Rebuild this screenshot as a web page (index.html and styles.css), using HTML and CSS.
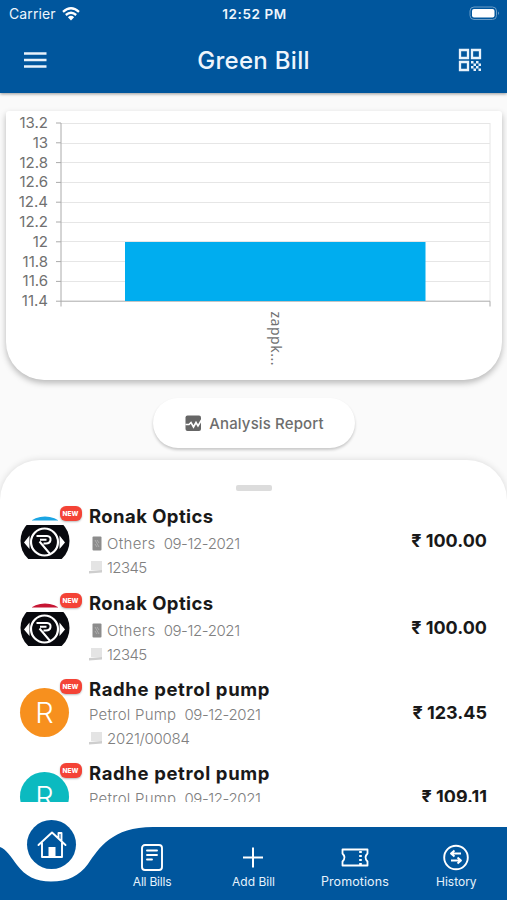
FILE: index.html
```html
<!DOCTYPE html>
<html lang="en">
<head>
<meta charset="utf-8">
<title>Green Bill</title>
<link rel="stylesheet" href="styles.css">
</head>
<body>
<svg width="0" height="0" class="defs" aria-hidden="true">
  <defs>
    <clipPath id="disc"><circle cx="25" cy="25" r="24.5"/></clipPath>
    <g id="optics" clip-path="url(#disc)">
      <rect y="9" width="50" height="34" fill="#08090e"/>
      <path d="M9.500 19.500 4 26.500 9.500 33Z M39.500 19.500 45 26.500 39.500 33Z" fill="#fff"/>
      <circle cx="24.500" cy="26" r="13.500" fill="#08090e" stroke="#fff" stroke-width="2.200"/>
      <path d="M16.500 20H27Q31 20.500 30.500 24T26 27.500H23.500M20 23.700H26.500M19.500 25.500 30.500 38.500" fill="none" stroke="#fff" stroke-width="2"/>
    </g>
    <g id="receipt"><path d="M2 1H13V10H2Z" fill="#e4e4e4"/><path d="M0 11 13 10V12.500L0 13.500Z" fill="#cecece"/></g>
    <g id="device"><rect x=".5" y=".5" width="9" height="14" rx="1" fill="#8c8c8c"/><path d="M3 4 7 11M3 8 5 11M5 4 7 7" stroke="#adadad" stroke-width="1"/></g>
  </defs>
</svg>
<div class="screen">
  <header class="top">
    <div class="status">
      <div class="carrier">Carrier
        <svg width="18" height="14" viewBox="0 0 18 14" fill="none" stroke="#fff" stroke-width="2.300"><path d="M1 4.800Q9-2.200 17 4.800M3.800 8Q9 3.600 14.200 8"/><path d="M5.900 10.200Q9 7.500 12.100 10.200L9 13.500Z" fill="#fff" stroke="none"/></svg>
      </div>
      <div class="clock">12:52 PM</div>
      <svg class="battery" width="31" height="15" viewBox="0 0 31 15"><rect x="1" y="1" width="26.500" height="12.500" rx="4" fill="none" stroke="#6b9dc7"/><rect x="3" y="3" width="22.500" height="8.500" rx="2" fill="#fff"/><path d="M29 5.500Q31 7.200 29 9Z" fill="#6b9dc7"/></svg>
    </div>
    <div class="appbar">
      <svg width="24" height="18" viewBox="0 0 24 18" stroke="#e8f2fb" stroke-width="2.500"><path d="M1 2.500H23.500M1 9H23.500M1 15.500H23.500"/></svg>
      <h1>Green Bill</h1>
      <svg width="24" height="24" viewBox="0 0 24 24"><path d="M2 2H10V10H2ZM14 2H22V10H14ZM2 14H10V22H2Z" fill="none" stroke="#e8f2fb" stroke-width="2.300"/><path d="M13 13h2.500v2.500H13zM18 13h2.500v2.500H18zM15.500 15.500H18V18h-2.500zM20.500 15.500H23V18h-2.500zM13 18h2.500v2.500H13zM18 18h2.500v2.500H18zM15.500 20.500H18V23h-2.500zM20.500 20.500H23V23h-2.500z" fill="#e8f2fb"/></svg>
    </div>
  </header>

  <section class="chart-card">
    <svg width="496" height="269" viewBox="6 111 496 269">
      <path d="M61 123.500H490M61 143.500H490M61 162.500H490M61 182.500H490M61 202.500H490M61 222.500H490M61 241.500H490M61 261.500H490M61 281.500H490M490 123V301" stroke="#e6e6e6" fill="none"/>
      <path d="M56 123H61M56 142.800H61M56 162.600H61M56 182.400H61M56 202.200H61M56 222H61M56 241.800H61M56 261.600H61M56 281.400H61M56 301.200H490V306.500M61 123V306.500" stroke="#aaa" fill="none"/>
      <rect x="125" y="242" width="300.500" height="59" fill="#00adef"/>
      <g class="ticks">
        <text x="48" y="128">13.2</text><text x="48" y="147.800">13</text><text x="48" y="167.600">12.8</text><text x="48" y="187.400">12.6</text><text x="48" y="207.200">12.4</text><text x="48" y="227">12.2</text><text x="48" y="246.800">12</text><text x="48" y="266.600">11.8</text><text x="48" y="286.400">11.6</text><text x="48" y="306.200">11.4</text>
      </g>
      <text class="category" transform="translate(270.500 311.500) rotate(90)" textLength="54">zappk...</text>
    </svg>
  </section>

  <button class="report">
    <svg width="17" height="17" viewBox="0 0 17 17"><rect x=".5" y=".5" width="15.500" height="15.500" rx="2" fill="#666"/><path d="M.5 9.500H4L6 7.500 8.500 12 11 7.500 13 11 16.500 5" fill="none" stroke="#fff" stroke-width="1.600"/></svg>
    <span>Analysis Report</span>
  </button>

  <main class="sheet">
    <div class="handle"></div>
    <div class="list">
      <article class="bill shop">
        <div class="avatar"><svg width="50" height="50"><rect x="12" width="26" height="4.500" fill="#1ba5e3" clip-path="url(#disc)"/><use href="#optics"/></svg><b class="new">NEW</b></div>
        <div class="info"><h2>Ronak Optics</h2><p class="meta"><svg class="dev" width="10" height="15"><use href="#device"/></svg><span class="others">Others</span><span class="date">09-12-2021</span></p><p class="num"><svg width="14" height="14"><use href="#receipt"/></svg><span class="short">12345</span></p></div>
        <div class="price">₹ 100.00</div>
      </article>
      <article class="bill shop second">
        <div class="avatar"><svg width="50" height="50"><rect x="12" width="26" height="4.500" fill="#c61533" clip-path="url(#disc)"/><use href="#optics"/></svg><b class="new">NEW</b></div>
        <div class="info"><h2>Ronak Optics</h2><p class="meta"><svg class="dev" width="10" height="15"><use href="#device"/></svg><span class="others">Others</span><span class="date">09-12-2021</span></p><p class="num"><svg width="14" height="14"><use href="#receipt"/></svg><span class="short">12345</span></p></div>
        <div class="price">₹ 100.00</div>
      </article>
      <article class="bill pump">
        <div class="avatar"><div class="letter orange">R</div><b class="new">NEW</b></div>
        <div class="info"><h2>Radhe petrol pump</h2><p class="meta"><span class="kind">Petrol Pump</span><span class="date">09-12-2021</span></p><p class="num"><svg width="14" height="14"><use href="#receipt"/></svg><span class="long">2021/00084</span></p></div>
        <div class="price">₹ 123.45</div>
      </article>
      <article class="bill pump">
        <div class="avatar"><div class="letter teal">R</div><b class="new">NEW</b></div>
        <div class="info"><h2>Radhe petrol pump</h2><p class="meta"><span class="kind">Petrol Pump</span><span class="date">09-12-2021</span></p></div>
        <div class="price">₹ 109.11</div>
      </article>
    </div>
  </main>

  <nav class="tabs">
    <svg class="wave" width="507" height="100" viewBox="0 800 507 100"><path d="M0 847C6 849 11 857 17 865C25 876 36 881.500 51 881.500C68 881.500 79 876 88 864C99 848 112 827 153 827H507V900H0Z" fill="#00569d"/></svg>
    <a class="home"><svg width="30" height="28" viewBox="0 0 30 28" fill="none" stroke="#fff" stroke-width="1.900" stroke-linejoin="round" stroke-linecap="round"><path d="M1.500 14 15 1.500 28.500 14M5 12V26H25V12M21.500 7V2H24.500V10"/><path d="M11.500 26V16H18.500V26Z" fill="#fff" stroke="none"/></svg></a>
    <a class="tab"><svg width="30" height="30" viewBox="0 0 30 30" fill="none" stroke="#fff" stroke-width="1.900" stroke-linecap="round"><rect x="5" y="3" width="20" height="25" rx="3"/><path d="M10 8.500H20M10 13H20M10 17.500H15"/></svg><span class="l1">All Bills</span></a>
    <a class="tab"><svg width="30" height="30" viewBox="0 0 30 30" stroke="#fff" stroke-width="2"><path d="M15 5.500V25.500M5 15.500H25"/></svg><span class="l2">Add Bill</span></a>
    <a class="tab"><svg width="30" height="30" viewBox="0 0 30 30" fill="none" stroke="#fff" stroke-width="1.800" stroke-linejoin="round"><path d="M2.500 7.500H27.500V11.500Q23.500 15.500 27.500 19.500V23.500H2.500V19.500Q6.500 15.500 2.500 11.500Z"/><path d="M20.500 9V23" stroke-width="2.600" stroke-dasharray="2 2"/></svg><span class="l3">Promotions</span></a>
    <a class="tab"><svg width="30" height="30" viewBox="0 0 30 30" fill="none" stroke="#fff" stroke-width="1.900" stroke-linejoin="round"><circle cx="15" cy="15.500" r="11.800"/><path d="M20 11.500H10M13.500 8.500 10 11.500 13.500 14.500M10 18.500H20M16.500 15.500 20 18.500 16.500 21.500"/></svg><span class="l4">History</span></a>
  </nav>
</div>
</body>
</html>
```
FILE: styles.css
```css
* { box-sizing: border-box; }
body, h1, h2, p { margin: 0; }
body { background: #fafafa; font-family: Inter, "Liberation Sans", sans-serif; }
svg { display: block; flex: none; }
.defs { position: absolute; }
.screen { width: 507px; height: 900px; overflow: hidden; display: flex; flex-direction: column; align-items: center; background: #fafafa; }

.top { width: 100%; height: 93px; flex: none; background: #00569d; color: #eef5fc; box-shadow: 0 1px 3px #0006; }
.status { height: 27px; padding: 0 7px 0 9px; display: grid; grid-template-columns: 1fr auto 1fr; align-items: center; font-size: 14px; }
.carrier { display: flex; align-items: center; gap: 6px; letter-spacing: .1px; }
.clock { font-size: 13.5px; font-weight: 600; letter-spacing: .6px; }
.battery { justify-self: end; }
.appbar { height: 66px; padding: 0 25px 0 23px; display: flex; align-items: center; justify-content: space-between; }
h1 { font-size: 24px; font-weight: 500; letter-spacing: .3px; margin-left: 2px; }

.chart-card { width: 496px; height: 269px; margin-top: 18px; flex: none; background: #fff; border-radius: 3px 3px 38px 38px; box-shadow: 0 3px 6px #0004; }
.ticks text { font-size: 15px; fill: #707070; text-anchor: end; }
.category { font-family: "Noto Sans", sans-serif; font-size: 14px; fill: #707070; }

.report { width: 202px; height: 50px; margin: 18px 0 0; padding: 0 0 0 2px; flex: none; border: 0; border-radius: 25px; background: #fff; color: #6d6d6d; box-shadow: 0 2px 3px #0003; display: flex; align-items: center; justify-content: center; gap: 7px; font: 500 15px Inter, sans-serif; letter-spacing: .13px; }

.sheet { width: 100%; height: 440px; margin-top: 12px; flex: none; background: #fff; border-radius: 40px 40px 0 0; box-shadow: 0 0 7px #0002; }
.handle { width: 36px; height: 6px; margin: 25px auto 0; border-radius: 2px; background: #dcdcdc; }
.list { height: 301px; margin-top: 10px; padding-top: 6px; overflow: hidden; }
.bill { height: 84px; padding: 0 20px; display: flex; }
.shop { height: 87px; }
.shop.second { height: 86px; }
.avatar { width: 69px; position: relative; padding-top: 8px; }
.shop .avatar { padding-top: 9px; }
.letter { width: 49px; height: 49px; border-radius: 50%; color: #fff; font: 300 29px/49px Inter, sans-serif; text-align: center; }
.orange { background: #f7901e; }
.teal { background: #0bbac0; }
.new { position: absolute; left: 39.500px; top: -1px; width: 22px; height: 15px; border-radius: 6px; background: #f44336; color: #fff; font: 800 6.5px/16px Inter, sans-serif; text-align: center; box-shadow: 0 1px 2px #0004; }
.info { flex: 1; }
h2 { height: 20px; font-size: 18.500px; line-height: 18px; font-weight: 700; letter-spacing: .42px; color: #191919; }
.pump h2 { letter-spacing: .63px; }
.meta, .num { height: 24px; display: flex; align-items: center; font-size: 15px; font-weight: 300; color: #808080; white-space: nowrap; }
.meta { margin-top: 2px; }
.shop .meta { margin-top: 4px; }
.num svg { margin-right: 4px; }
.dev { margin: 0 5px 0 3px; }
.others { margin-right: 8px; letter-spacing: .35px; }
.kind { margin-right: 8px; letter-spacing: .25px; }
.date { letter-spacing: -.4px; }
.short { letter-spacing: -.6px; }
.long { letter-spacing: -.25px; }
.price { height: 20px; margin-top: 23px; line-height: 20px; font-size: 18px; font-weight: 700; color: #191919; white-space: nowrap; }
.shop .price { margin-top: 24px; }

.tabs { width: 507px; height: 100px; margin-top: -100px; flex: none; position: relative; display: grid; grid-template-columns: repeat(5, 1fr); }
.wave { position: absolute; inset: 0; }
.home { width: 49px; height: 49px; margin: 20px 0 0 27px; position: relative; border-radius: 50%; background: #00569d; display: flex; align-items: center; justify-content: center; }
.tab { position: relative; padding-top: 42px; display: flex; flex-direction: column; align-items: center; font-size: 12px; line-height: 18px; color: #e6f2fc; gap: 1px; }
.l1 { letter-spacing: -.2px; }
.l3 { font-size: 12.500px; letter-spacing: .1px; }
```
